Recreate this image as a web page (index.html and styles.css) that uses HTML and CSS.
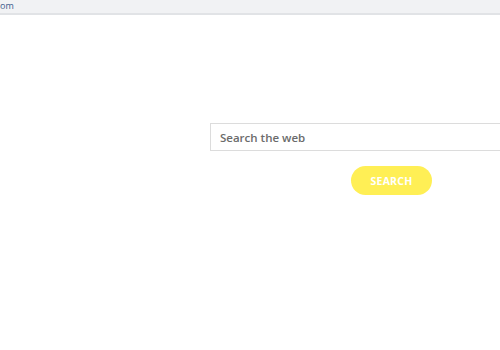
FILE: index.html
```html
<!DOCTYPE html>
<html>
<head>
    <link rel="stylesheet" href="styles.css">
</head>
<body>
    <div class="address-bar">
        <span class="address-text">om</span>
    </div>

    <div class="page">
        <form class="search-form" onsubmit="return false;">
            <input class="search-input" type="text" placeholder="Search the web">
            <button class="search-btn" type="submit">SEARCH</button>
        </form>
    </div>
</body>
</html>
```

FILE: styles.css
```css
:root {
    --bar-bg: #f1f2f4;
    --bar-line: #e1e3e6;
    --link-blue: #3d5c8c;
    --text-gray: #6b6b6b;
    --yellow: #ffef55;
}

* {
    margin: 0;
    padding: 0;
    box-sizing: border-box;
}

body {
    background: #ffffff;
    font-family: "Open Sans", Arial, sans-serif;
    overflow: hidden;
    width: 500px;
    height: 350px;
}

.address-bar {
    height: 15px;
    background: var(--bar-bg);
    border-bottom: 2px solid var(--bar-line);
    display: flex;
    align-items: center;
}

.address-text {
    font-family: "Open Sans", Arial, sans-serif;
    font-size: 9px;
    color: var(--link-blue);
    line-height: 1;
    margin-top: -2px;
}

.page {
    padding-top: 108px;
    padding-left: 210px;
}

.search-form {
    width: 363px;
    display: flex;
    flex-direction: column;
    align-items: center;
    gap: 15px;
}

.search-input {
    width: 100%;
    height: 28px;
    border: 1px solid #dcdcdc;
    padding: 0 9px;
    font-family: "Open Sans", Arial, sans-serif;
    font-size: 11.5px;
    font-weight: 600;
    outline: none;
}

.search-input::placeholder {
    color: var(--text-gray);
}

.search-btn {
    width: 81px;
    height: 29px;
    border: none;
    border-radius: 15px;
    background: var(--yellow);
    color: #ffffff;
    font-family: "Open Sans", Arial, sans-serif;
    font-weight: 700;
    font-size: 10.5px;
    letter-spacing: 0.2px;
    cursor: pointer;
}
```
